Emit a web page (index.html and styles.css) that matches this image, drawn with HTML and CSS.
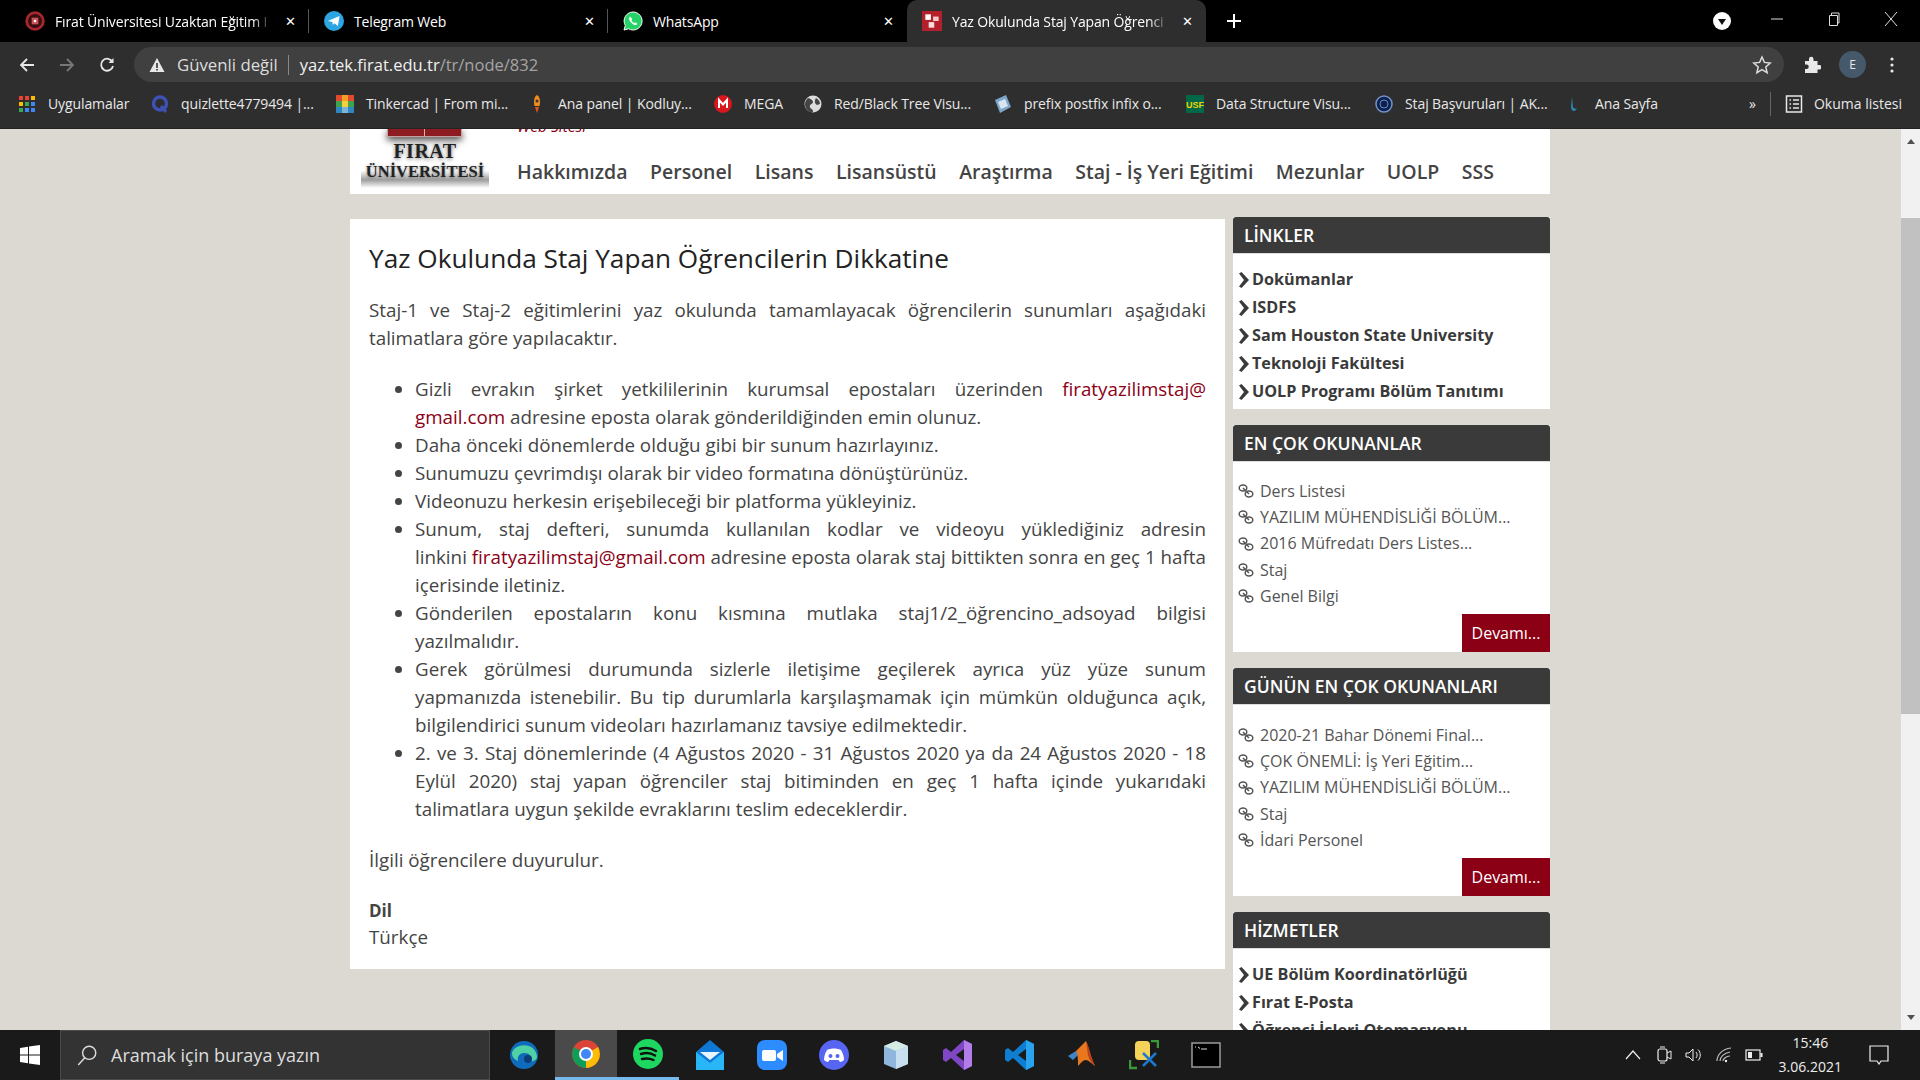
FILE: index.html
```html
<!DOCTYPE html>
<html lang="tr">
<head>
    <meta charset="UTF-8">
    <title>Yaz Okulunda Staj Yapan Öğrencilerin Dikkatine</title>
    <link rel="stylesheet" href="styles.css">
</head>
<body>
    <svg class="sprite" width="0" height="0">
        <symbol id="chev" viewBox="0 0 12 16"><path d="M1 1.500 3.500 0 11 8l-7.500 8L1 14.500 6 8z" fill="#3a3a3a"/></symbol>
        <symbol id="chain" viewBox="0 0 16 16"><g fill="none" stroke="#555" stroke-width="1.500"><ellipse cx="5" cy="5" rx="3.800" ry="3"/><ellipse cx="11" cy="11" rx="3.800" ry="3"/><path d="M5 5 11 11"/></g></symbol>
    </svg>

    <div class="tabstrip">
        <div class="tab">
            <svg class="favicon" viewBox="0 0 18 18"><circle cx="9" cy="9" r="7.500" fill="#3a0d10" stroke="#a8262e" stroke-width="2.500"/><rect x="6" y="6" width="6" height="6" fill="#c9545a"/><rect x="8" y="8" width="2" height="2" fill="#fff"/></svg>
            <span class="tab-title tab-fade">Fırat Üniversitesi Uzaktan Eğitim I</span>
            <span class="tab-close">✕</span>
        </div>
        <div class="tab">
            <svg class="favicon" viewBox="0 0 18 18"><circle cx="9" cy="9" r="9" fill="#2ca5e0"/><path d="M3.500 9 14 4.500 12.500 13.500 9.500 11 8 12.500 7.500 10z" fill="#fff"/></svg>
            <span class="tab-title">Telegram Web</span>
            <span class="tab-close">✕</span>
        </div>
        <div class="tab">
            <svg class="favicon" viewBox="0 0 20 20"><path d="M10 1a9 9 0 0 0-7.700 13.500L1 19l4.600-1.200A9 9 0 1 0 10 1z" fill="#25d366" stroke="#fff"/><path d="M7 5.500c-2 1.500-.5 4.500 1.500 6.500s4.500 3 6 1l-2-1.700-1.200.8c-1-.4-2.400-1.800-2.800-2.900l.8-1.100z" fill="#fff"/></svg>
            <span class="tab-title">WhatsApp</span>
            <span class="tab-close">✕</span>
        </div>
        <div class="tab tab-active">
            <svg class="favicon" viewBox="0 0 18 18"><rect width="18" height="18" fill="#b3202c"/><rect x="3" y="3" width="5" height="5" fill="#fff"/><rect x="10" y="5" width="5" height="4" fill="#f0c8c8"/><rect x="6" y="10" width="5" height="5" fill="#f4dede"/></svg>
            <span class="tab-title tab-fade">Yaz Okulunda Staj Yapan Öğrenci</span>
            <span class="tab-close">✕</span>
        </div>
        <svg class="newtab" viewBox="0 0 14 14"><path d="M7 0v14M0 7h14" stroke="#fff" stroke-width="2"/></svg>
        <svg class="tabsearch" viewBox="0 0 18 18"><circle cx="9" cy="9" r="9" fill="#fff"/><path d="M5 7h8l-4 6z" fill="#111"/></svg>
        <div class="winbtns">
            <svg viewBox="0 0 14 14"><path d="M1 7h12" stroke="#ddd"/></svg>
            <svg viewBox="0 0 14 14"><path d="M2.500 3.500h8v10h-8zM4.500 3.500V1h7.500v10h-1.500" fill="none" stroke="#ddd"/></svg>
            <svg viewBox="0 0 14 14"><path d="M1 0l12 14M13 0 1 14" stroke="#ddd"/></svg>
        </div>
    </div>

    <div class="toolbar">
        <svg class="navicon" viewBox="0 0 16 16"><path d="M15 8H2M8 2 2 8l6 6" fill="none" stroke="#e8e8e8" stroke-width="1.800"/></svg>
        <svg class="navicon" viewBox="0 0 16 16"><path d="M1 8h13M8 2l6 6-6 6" fill="none" stroke="#777" stroke-width="1.800"/></svg>
        <svg class="navicon" viewBox="0 0 16 16"><path d="M13.500 5A6 6 0 1 0 14 9" fill="none" stroke="#e8e8e8" stroke-width="1.800"/><path d="M14.500 1v5h-5z" fill="#e8e8e8"/></svg>
        <div class="omnibox">
            <svg class="warn" viewBox="0 0 16 16"><path d="M8 1 15.500 15H.5z" fill="#e8e8e8"/><path d="M7.200 6h1.600v5H7.200zM7.200 12h1.600v1.600H7.200z" fill="#333"/></svg>
            <span class="insecure">Güvenli değil</span>
            <span class="omni-sep"></span>
            <span class="url">yaz.tek.firat.edu.tr<span class="url-path">/tr/node/832</span></span>
            <svg class="star" viewBox="0 0 20 20"><path d="M10 2l2.400 5.400 5.800.6-4.400 3.900 1.300 5.800-5.100-3-5.100 3 1.300-5.800L1.800 8l5.800-.6z" fill="none" stroke="#ddd" stroke-width="1.500"/></svg>
        </div>
        <svg class="puzzle" viewBox="0 0 18 18"><path d="M2 5h4V3a2.200 2.200 0 0 1 4.500 0v2h4v4h2a2.200 2.200 0 0 1 0 4.500h-2V17H2v-4h1.500a2.200 2.200 0 0 0 0-4.500H2z" fill="#e8e8e8"/></svg>
        <span class="avatar">E</span>
        <svg class="kebab" viewBox="0 0 4 16"><circle cx="2" cy="2" r="1.600" fill="#e8e8e8"/><circle cx="2" cy="8" r="1.600" fill="#e8e8e8"/><circle cx="2" cy="14" r="1.600" fill="#e8e8e8"/></svg>
    </div>

    <div class="bookmarks">
        <div class="bm">
            <svg class="bm-icon" viewBox="0 0 18 18"><rect x="1" y="1" width="4" height="4" fill="#ea4335"/><rect x="7" y="1" width="4" height="4" fill="#ea4335"/><rect x="13" y="1" width="4" height="4" fill="#fbbc05"/><rect x="1" y="7" width="4" height="4" fill="#fbbc05"/><rect x="7" y="7" width="4" height="4" fill="#34a853"/><rect x="13" y="7" width="4" height="4" fill="#4285f4"/><rect x="1" y="13" width="4" height="4" fill="#34a853"/><rect x="7" y="13" width="4" height="4" fill="#4285f4"/><rect x="13" y="13" width="4" height="4" fill="#4285f4"/></svg>
            <span>Uygulamalar</span>
        </div>
        <div class="bm">
            <svg class="bm-icon" viewBox="0 0 18 18"><circle cx="9" cy="8.500" r="6.500" fill="none" stroke="#3f51b5" stroke-width="3.500"/><path d="M10 11l5 6" stroke="#3f51b5" stroke-width="3"/></svg>
            <span>quizlette4779494 |...</span>
        </div>
        <div class="bm">
            <svg class="bm-icon" viewBox="0 0 18 18"><rect width="6" height="6" fill="#e2492f"/><rect x="6" width="6" height="6" fill="#f4a024"/><rect x="12" width="6" height="6" fill="#e2492f"/><rect y="6" width="6" height="6" fill="#3fa34d"/><rect x="6" y="6" width="6" height="6" fill="#f4d03f"/><rect x="12" y="6" width="6" height="6" fill="#3fa34d"/><rect y="12" width="6" height="6" fill="#2e86c1"/><rect x="6" y="12" width="6" height="6" fill="#7fb3d5"/><rect x="12" y="12" width="6" height="6" fill="#2e86c1"/></svg>
            <span>Tinkercad | From mi...</span>
        </div>
        <div class="bm">
            <svg class="bm-icon" viewBox="0 0 18 18"><path d="M9 0c3 2 3.500 6 2.500 11h-5C5.500 6 6 2 9 0z" fill="#f08c1e"/><circle cx="9" cy="6" r="1.500" fill="#333"/><path d="M7 12h4l-2 6z" fill="#e0561b"/></svg>
            <span>Ana panel | Kodluy...</span>
        </div>
        <div class="bm">
            <svg class="bm-icon" viewBox="0 0 18 18"><circle cx="9" cy="9" r="9" fill="#d9161c"/><path d="M5 13V5l4 4.500L13 5v8" fill="none" stroke="#fff" stroke-width="2"/></svg>
            <span>MEGA</span>
        </div>
        <div class="bm">
            <svg class="bm-icon" viewBox="0 0 18 18"><circle cx="9" cy="9" r="8.500" fill="#dcdcdc"/><path d="M4 3c3 1 5 2 5 4s-4 2-3 5 3 1 3 5c-4 1-8-3-8-8 0-2 1-4 3-6zM12 3c2 1 4 3 4 6l-3 1c-2-1-3-4-1-7z" fill="#444"/></svg>
            <span>Red/Black Tree Visu...</span>
        </div>
        <div class="bm">
            <svg class="bm-icon" viewBox="0 0 18 18"><path d="M1 5 12 0l5 12-11 6z" fill="#7ea6c9"/><path d="M4 7l7-3 3 7-7 3z" fill="#d8e6f2"/></svg>
            <span>prefix postfix infix o...</span>
        </div>
        <div class="bm">
            <svg class="bm-icon" viewBox="0 0 18 18"><rect width="18" height="18" fill="#006747"/><text x="9" y="13" class="usf">USF</text></svg>
            <span>Data Structure Visu...</span>
        </div>
        <div class="bm">
            <svg class="bm-icon" viewBox="0 0 18 18"><circle cx="9" cy="9" r="8" fill="#10204a" stroke="#6f93c9" stroke-width="1.500"/><circle cx="9" cy="9" r="4" fill="none" stroke="#5b8fd6"/></svg>
            <span>Staj Başvuruları | AK...</span>
        </div>
        <div class="bm">
            <svg class="bm-icon" viewBox="0 0 18 18"><path d="M7 2c1 4 0 7 1 10 .5 2 3 2 4 1-1 3-4 4-5 2-2-3 0-9 0-13z" fill="#2b8cb0"/></svg>
            <span>Ana Sayfa</span>
        </div>
        <div class="bm-right">
            <span class="bm-more">»</span>
            <span class="bm-sep"></span>
            <svg class="bm-icon" viewBox="0 0 18 18"><rect x="1.500" y="1" width="15" height="16" fill="none" stroke="#e8e8e8" stroke-width="1.500"/><path d="M4.500 5h1.500M8 5h6M4.500 9h1.500M8 9h6M4.500 13h1.500M8 13h6" stroke="#e8e8e8" stroke-width="1.500"/></svg>
            <span>Okuma listesi</span>
        </div>
    </div>

    <div class="viewport">
        <div class="page">
            <header class="site-header">
                <div class="logo">
                    <div class="logo-mark"></div>
                    <div class="logo-name">FIRAT</div>
                    <div class="logo-uni">ÜNİVERSİTESİ</div>
                </div>
                <div class="header-right">
                    <div class="site-sub"><span>Web Sitesi</span></div>
                    <nav class="mainnav">
                        <a>Hakkımızda</a>
                        <a>Personel</a>
                        <a>Lisans</a>
                        <a>Lisansüstü</a>
                        <a>Araştırma</a>
                        <a>Staj - İş Yeri Eğitimi</a>
                        <a>Mezunlar</a>
                        <a>UOLP</a>
                        <a>SSS</a>
                    </nav>
                </div>
            </header>

            <div class="columns">
                <main class="content">
                    <h1>Yaz Okulunda Staj Yapan Öğrencilerin Dikkatine</h1>
                    <p>Staj-1 ve Staj-2 eğitimlerini yaz okulunda tamamlayacak öğrencilerin sunumları aşağıdaki talimatlara göre yapılacaktır.</p>
                    <ul>
                        <li><span class="full-line">Gizli evrakın şirket yetkililerinin kurumsal epostaları üzerinden <a>firatyazilimstaj@</a></span><a>gmail.com</a> adresine eposta olarak gönderildiğinden emin olunuz.</li>
                        <li>Daha önceki dönemlerde olduğu gibi bir sunum hazırlayınız.</li>
                        <li>Sunumuzu çevrimdışı olarak bir video formatına dönüştürünüz.</li>
                        <li>Videonuzu herkesin erişebileceği bir platforma yükleyiniz.</li>
                        <li><span class="full-line">Sunum, staj defteri, sunumda kullanılan kodlar ve videoyu yüklediğiniz adresin</span>linkini <a>firatyazilimstaj@gmail.com</a> adresine eposta olarak staj bittikten sonra en geç 1 hafta içerisinde iletiniz.</li>
                        <li>Gönderilen epostaların konu kısmına mutlaka staj1/2_öğrencino_adsoyad bilgisi yazılmalıdır.</li>
                        <li>Gerek görülmesi durumunda sizlerle iletişime geçilerek ayrıca yüz yüze sunum yapmanızda istenebilir. Bu tip durumlarla karşılaşmamak için mümkün olduğunca açık, bilgilendirici sunum videoları hazırlamanız tavsiye edilmektedir.</li>
                        <li>2. ve 3. Staj dönemlerinde (4 Ağustos 2020 - 31 Ağustos 2020 ya da 24 Ağustos 2020 - 18 Eylül 2020) staj yapan öğrenciler staj bitiminden en geç 1 hafta içinde yukarıdaki talimatlara uygun şekilde evraklarını teslim edeceklerdir.</li>
                    </ul>
                    <p>İlgili öğrencilere duyurulur.</p>
                    <div class="field-label">Dil</div>
                    <div class="field-value">Türkçe</div>
                </main>

                <aside class="sidebar">
                    <section class="widget">
                        <h2>LİNKLER</h2>
                        <ul class="bold-links">
                            <li><svg><use href="#chev"/></svg>Dokümanlar</li>
                            <li><svg><use href="#chev"/></svg>ISDFS</li>
                            <li><svg><use href="#chev"/></svg>Sam Houston State University</li>
                            <li><svg><use href="#chev"/></svg>Teknoloji Fakültesi</li>
                            <li><svg><use href="#chev"/></svg>UOLP Programı Bölüm Tanıtımı</li>
                        </ul>
                    </section>
                    <section class="widget">
                        <h2>EN ÇOK OKUNANLAR</h2>
                        <ul class="read-links">
                            <li><svg><use href="#chain"/></svg>Ders Listesi</li>
                            <li><svg><use href="#chain"/></svg>YAZILIM MÜHENDİSLİĞİ BÖLÜM...</li>
                            <li><svg><use href="#chain"/></svg>2016 Müfredatı Ders Listes...</li>
                            <li><svg><use href="#chain"/></svg>Staj</li>
                            <li><svg><use href="#chain"/></svg>Genel Bilgi</li>
                        </ul>
                        <div class="more-row"><a class="more">Devamı...</a></div>
                    </section>
                    <section class="widget">
                        <h2>GÜNÜN EN ÇOK OKUNANLARI</h2>
                        <ul class="read-links">
                            <li><svg><use href="#chain"/></svg>2020-21 Bahar Dönemi Final...</li>
                            <li><svg><use href="#chain"/></svg>ÇOK ÖNEMLİ: İş Yeri Eğitim...</li>
                            <li><svg><use href="#chain"/></svg>YAZILIM MÜHENDİSLİĞİ BÖLÜM...</li>
                            <li><svg><use href="#chain"/></svg>Staj</li>
                            <li><svg><use href="#chain"/></svg>İdari Personel</li>
                        </ul>
                        <div class="more-row"><a class="more">Devamı...</a></div>
                    </section>
                    <section class="widget">
                        <h2>HİZMETLER</h2>
                        <ul class="bold-links">
                            <li><svg><use href="#chev"/></svg>UE Bölüm Koordinatörlüğü</li>
                            <li><svg><use href="#chev"/></svg>Fırat E-Posta</li>
                            <li><svg><use href="#chev"/></svg>Öğrenci İşleri Otomasyonu</li>
                        </ul>
                    </section>
                </aside>
            </div>
        </div>
        <div class="scrollbar">
            <span class="arrow-up"></span>
            <div class="scroll-track"><div class="scroll-thumb"></div></div>
            <span class="arrow-down"></span>
        </div>
    </div>

    <div class="taskbar">
        <svg class="start" viewBox="0 0 20 20"><path d="M0 3l8-1.200V9.500H0zM9 1.600 20 0v9.500H9zM0 10.500h8v7.700L0 17zM9 10.500h11V20L9 18.400z" fill="#fff"/></svg>
        <div class="searchbox">
            <svg viewBox="0 0 20 20"><circle cx="12" cy="8" r="6" fill="none" stroke="#ddd" stroke-width="1.300"/><path d="M8 12.500 2 19" stroke="#ddd" stroke-width="1.300"/></svg>
            <span>Aramak için buraya yazın</span>
        </div>
        <div class="taskicons">
            <div class="ti"><svg viewBox="0 0 30 30"><circle cx="15" cy="15" r="14" fill="#0f6cbd"/><path d="M3 13C5 3 27 1 28 17c0 3-4 5-8 4 3-3 2-8-5-8-4 0-7 3-6 8C5 19 3 17 3 13z" fill="#4fd1a5"/><circle cx="19" cy="19" r="4" fill="#0c3f7a"/></svg></div>
            <div class="ti ti-active"><svg viewBox="0 0 30 30"><circle cx="15" cy="15" r="14" fill="#db4437"/><path d="M15 15 27 8a14 14 0 0 1-12 21z" fill="#fbbc05"/><path d="M15 15 15 29A14 14 0 0 1 3 8z" fill="#0f9d58"/><circle cx="15" cy="15" r="7" fill="#fff"/><circle cx="15" cy="15" r="5" fill="#4285f4"/></svg></div>
            <div class="ti ti-open"><svg viewBox="0 0 30 30"><circle cx="15" cy="15" r="15" fill="#1ed760"/><path d="M7 10c6-2 11-1 16 2M8 15c5-1.500 10-1 14 1.500M9 20c4-1 8-.7 11.500 1" fill="none" stroke="#111" stroke-width="2.500" stroke-linecap="round"/></svg></div>
            <div class="ti"><svg viewBox="0 0 30 30"><path d="M1 12 15 0l14 12v18H1z" fill="#0f78d4"/><path d="M1 12l14 11 14-11v18H1z" fill="#29b6f6"/><path d="M5 12h20l-10 8z" fill="#e8f4fc"/></svg></div>
            <div class="ti"><svg viewBox="0 0 30 30"><rect width="30" height="30" rx="8" fill="#2d8cff"/><rect x="5" y="10" width="14" height="11" rx="2" fill="#fff"/><path d="M20 14l6-4v11l-6-4z" fill="#fff"/></svg></div>
            <div class="ti"><svg viewBox="0 0 30 30"><circle cx="15" cy="15" r="15" fill="#5865f2"/><path d="M8 10c4-2 10-2 14 0 2 3 3 7 3 10-2 1.500-3 2-4 2l-1.500-2h-9L9 22c-1 0-2-.5-4-2 0-3 1-7 3-10z" fill="#fff"/><circle cx="11.500" cy="16" r="2" fill="#5865f2"/><circle cx="18.500" cy="16" r="2" fill="#5865f2"/></svg></div>
            <div class="ti"><svg viewBox="0 0 30 30"><path d="M15 1 27 6v18l-12 5-12-5V6z" fill="#8fb7dd"/><path d="M15 1 27 6l-12 5L3 6z" fill="#d5ece4"/><path d="M15 11v18l12-5V6z" fill="#c8dff0"/></svg></div>
            <div class="ti"><svg viewBox="0 0 30 30"><path d="M21 0 8 12 3 8 0 10v10l3 2 5-4 13 12 8-4V4zM21 9v12l-8-6z" fill="#7f47c4"/><path d="M21 0l8 4v22l-8 4z" fill="#b27de8"/></svg></div>
            <div class="ti"><svg viewBox="0 0 30 30"><path d="M21 0 8 12 3 8 0 10v10l3 2 5-4 13 12 8-4V4zM21 9v12l-8-6z" fill="#0e7fd0"/><path d="M21 0l8 4v22l-8 4z" fill="#29a3ee"/></svg></div>
            <div class="ti"><svg viewBox="0 0 30 30"><path d="M1 16 9 11l3 3-6 6z" fill="#3f86c8"/><path d="M9 11 19 1c3 6 5 17 9 25-4-3-7-6-9-6-3 0-5 3-8 6 0-6 0-11-2-15z" fill="#e8771d"/><path d="M19 1c3 6 5 17 9 25-4-3-6-7-7-11z" fill="#b9401b"/></svg></div>
            <div class="ti"><svg viewBox="0 0 30 30"><rect x="6" y="1" width="15" height="19" rx="4" fill="#f5d25a"/><path d="M1 20v8h7M22 1h7v7" fill="none" stroke="#3a9a3a" stroke-width="2.500"/><path d="M14 13l13 13M27 13 14 26" stroke="#1d78d0" stroke-width="2.500"/></svg></div>
            <div class="ti"><svg viewBox="0 0 30 30"><rect x="1" y="3" width="28" height="24" fill="#000" stroke="#9a9a9a" stroke-width="1.500"/><path d="M4 7h1M7 7l2 1.500M10 9h6" stroke="#ddd"/></svg></div>
        </div>
        <div class="tray">
            <svg class="tray-chev" viewBox="0 0 16 10"><path d="M1 9 8 1l7 8" fill="none" stroke="#eee" stroke-width="1.200"/></svg>
            <svg class="tray-ic" viewBox="0 0 18 18"><rect x="3" y="3" width="9" height="12" rx="2" fill="none" stroke="#eee" stroke-width="1.200"/><path d="M12 7l4-2v8l-4-2M5 1h5M5 17h5" fill="none" stroke="#eee"/></svg>
            <svg class="tray-ic" viewBox="0 0 18 18"><path d="M1 7h3l4-4v12l-4-4H1zM11 6c1.500 2 1.500 4 0 6M13 3.500c3 3 3 8 0 11" fill="none" stroke="#eee"/></svg>
            <svg class="tray-ic" viewBox="0 0 18 18"><path d="M2 15C2 9 7 3 16 2M5 15c0-4 4-8 10-9M8 15c0-2 3-5 7-5" fill="none" stroke="#bbb" stroke-width="1.200"/><circle cx="11" cy="15" r="1.200" fill="#eee"/></svg>
            <svg class="tray-ic" viewBox="0 0 18 18"><rect x="1" y="4" width="14" height="10" fill="none" stroke="#eee" stroke-width="1.200"/><rect x="3" y="6" width="4" height="6" fill="#eee"/><rect x="15.500" y="7" width="2" height="4" fill="#eee"/></svg>
            <div class="clock"><div>15:46</div><div>3.06.2021</div></div>
            <svg class="notif" viewBox="0 0 20 20"><path d="M1 1h18v15h-7l-2 3-2-3H1z" fill="none" stroke="#eee" stroke-width="1.200"/></svg>
        </div>
    </div>
</body>
</html>
```
FILE: styles.css
```css
* {
    box-sizing: border-box;
}
html, body {
    height: 100%;
}
body {
    margin: 0;
    display: flex;
    flex-direction: column;
    overflow: hidden;
    font-family: "Open Sans", "Noto Sans", sans-serif;
    background-color: #dcd8d2;
}
.sprite {
    position: absolute;
}

/* browser chrome */
.tabstrip {
    height: 42px;
    flex: none;
    display: flex;
    align-items: center;
    padding-left: 10px;
    background-color: #000;
    color: #fff;
    font-size: 14px;
}
.tab {
    width: 299px;
    height: 42px;
    padding: 0 10px 0 15px;
    display: flex;
    align-items: center;
    gap: 10px;
    position: relative;
}
.tab:nth-child(1)::after,
.tab:nth-child(2)::after {
    content: "";
    position: absolute;
    right: 0;
    top: 9px;
    height: 24px;
    width: 1px;
    background-color: #555;
}
.tab-active {
    background-color: #2e2e2e;
    border-radius: 10px 10px 0 0;
}
.favicon {
    width: 20px;
    height: 20px;
    flex: none;
}
.tab-title {
    flex: 1;
    white-space: nowrap;
    letter-spacing: -0.15px;
}
.tab-fade {
    -webkit-mask-image: linear-gradient(to right, #000 90%, transparent 99%);
    mask-image: linear-gradient(to right, #000 90%, transparent 99%);
}
.tab-close {
    font-size: 13px;
    width: 13px;
    text-align: center;
    margin-right: 2px;
}
.newtab {
    width: 14px;
    height: 14px;
    margin-left: 21px;
}
.tabsearch {
    width: 18px;
    height: 18px;
    margin-left: 472px;
}
.winbtns {
    margin-left: auto;
    display: flex;
    gap: 43px;
    padding-right: 22px;
    align-items: center;
    position: relative;
    top: -2px;
}
.winbtns svg {
    width: 14px;
    height: 14px;
}

.toolbar {
    height: 42px;
    flex: none;
    display: flex;
    align-items: center;
    padding: 3px 0 0 19px;
    background-color: #2e2e2e;
    color: #e8e8e8;
}
.navicon {
    width: 16px;
    height: 16px;
    margin-right: 24px;
}
.omnibox {
    width: 1650px;
    height: 35px;
    margin-left: -5px;
    padding: 0 12px 0 15px;
    display: flex;
    align-items: center;
    border-radius: 18px;
    background-color: #404040;
    font-size: 16.500px;
}
.warn {
    width: 16px;
    height: 16px;
    margin-right: 12px;
}
.insecure {
    color: #ddd;
    white-space: nowrap;
    font-size: 16.800px;
}
.omni-sep {
    width: 1px;
    height: 20px;
    margin: 0 11px 0 10px;
    background-color: #888;
}
.url {
    flex: 1;
    color: #f0f0f0;
    white-space: nowrap;
}
.url-path {
    color: #a5a5a5;
}
.star {
    width: 20px;
    height: 20px;
}
.puzzle {
    width: 18px;
    height: 18px;
    margin-left: 19px;
}
.avatar {
    width: 27px;
    height: 27px;
    margin-left: 18px;
    border-radius: 50%;
    background-color: #46596b;
    font-size: 12px;
    line-height: 27px;
    text-align: center;
}
.kebab {
    width: 4px;
    height: 16px;
    margin-left: 24px;
}

.bookmarks {
    height: 45px;
    flex: none;
    display: grid;
    grid-template-columns: 133px 185px 192px 186px 90px 190px 192px 189px 190px 160px 1fr;
    align-items: center;
    padding: 0 0 5px 18px;
    background-color: #2e2e2e;
    color: #e8e8e8;
    font-size: 14px;
    border-bottom: 1px solid #222;
}
.bm, .bm-right {
    display: flex;
    align-items: center;
    gap: 12px;
    white-space: nowrap;
}
.bm span {
    letter-spacing: -0.1px;
}
.bm-right {
    justify-content: flex-end;
    padding-right: 18px;
    gap: 11px;
}
.bm-icon {
    width: 18px;
    height: 18px;
    flex: none;
}
.usf {
    font: bold 9px "Liberation Sans", sans-serif;
    fill: #f5d000;
    text-anchor: middle;
}
.bm-more {
    font-size: 14px;
}
.bm-sep {
    width: 1px;
    height: 24px;
    margin: 0 3px;
    background-color: #666;
}

/* page area */
.viewport {
    flex: 1;
    min-height: 0;
    display: flex;
    overflow: hidden;
}
.page {
    flex: 1;
    padding-left: 350px;
    overflow: hidden;
}
.site-header {
    width: 1200px;
    height: 65px;
    display: flex;
    background-color: #fff;
}
.logo {
    width: 167px;
    padding-left: 11px;
    flex: none;
    text-align: center;
    font-family: "Liberation Serif", serif;
    font-weight: bold;
    color: #222;
}
.logo-mark {
    width: 75px;
    height: 8px;
    margin-left: 26px;
    background: linear-gradient(to right, #8c1c22 49%, #d8b0b0 49%, #d8b0b0 51%, #8c1c22 51%);
    border: 1px solid #c9a0a0;
    border-top: none;
    box-shadow: 0 3px 7px #444;
}
.logo-name {
    width: 128px;
    font-size: 20px;
    line-height: 20px;
    margin-top: 4px;
    letter-spacing: 0.5px;
    text-shadow: 0 1px 4px #777;
}
.logo-uni {
    width: 128px;
    height: 27px;
    font-size: 16.500px;
    line-height: 21px;
    background: linear-gradient(to bottom, transparent 35%, rgba(0, 0, 0, 0.38) 70%, transparent);
    text-shadow: 0 1px 3px #777;
}
.header-right {
    flex: 1;
}
.site-sub {
    height: 6px;
    display: flex;
    align-items: flex-end;
    overflow: hidden;
    font-size: 15.500px;
    line-height: 18px;
    font-style: italic;
    color: #8c0016;
}
.mainnav {
    margin-top: 23px;
    display: flex;
    gap: 22.500px;
    font-size: 19.500px;
    font-weight: 600;
    line-height: 28px;
    color: #444;
    white-space: nowrap;
}
.columns {
    width: 1200px;
    margin-top: 23px;
    display: flex;
    align-items: flex-start;
    gap: 8px;
}
.content {
    width: 875px;
    height: 750px;
    margin-top: 2px;
    padding: 21px 19px 0;
    background-color: #fff;
    color: #444;
    font-size: 18.800px;
    line-height: 28px;
    text-align: justify;
}
.content h1 {
    margin: 0 0 20px;
    font-size: 26.200px;
    font-weight: 400;
    line-height: 36px;
    color: #222;
    text-align: left;
}
.content p {
    margin: 0;
}
.content ul {
    margin: 23px 0;
    padding-left: 46px;
}
.content a {
    color: #8c0016;
}
/* a list line that has to end at this word, still stretched to the right edge */
.full-line {
    display: block;
    text-align-last: justify;
}
.field-label {
    margin-top: 24px;
    font-size: 17px;
    font-weight: 700;
    line-height: 26px;
}
.field-value {
    line-height: 26px;
}

.sidebar {
    width: 317px;
    flex: none;
}
.widget {
    margin-bottom: 16px;
    background-color: #fff;
}
.widget h2 {
    margin: 0;
    height: 37px;
    padding-left: 11px;
    background-color: #3a3a3a;
    border-radius: 3px 3px 0 0;
    border-bottom: 1px solid #ddd;
    color: #fff;
    font-size: 17.500px;
    font-weight: 600;
    line-height: 36px;
}
.widget ul {
    list-style: none;
    margin: 0;
    padding: 0;
}
.widget .bold-links {
    padding: 11px 0 4px 5px;
    font-size: 16.200px;
    font-weight: 700;
    line-height: 28px;
    color: #3a3a3a;
}
.bold-links li {
    display: flex;
    align-items: center;
    white-space: nowrap;
}
.bold-links svg {
    width: 12px;
    height: 18px;
    margin: 2px 2px 0 0;
    flex: none;
}
.widget .read-links {
    padding: 16px 0 5px 5px;
    font-size: 16px;
    line-height: 26.200px;
    color: #555;
}
.widget:nth-child(3) .read-links {
    padding-top: 17px;
}
.read-links li {
    display: flex;
    align-items: center;
    white-space: nowrap;
}
.read-links svg {
    width: 16px;
    height: 16px;
    margin-right: 6px;
    flex: none;
}
.more-row {
    display: flex;
    justify-content: flex-end;
}
.more {
    width: 88px;
    height: 38px;
    background-color: #8c0016;
    color: #fff;
    font-size: 16px;
    line-height: 38px;
    text-align: center;
}

.scrollbar {
    width: 19px;
    flex: none;
    display: flex;
    flex-direction: column;
    align-items: center;
    background-color: #f1f1f1;
}
.arrow-up, .arrow-down {
    width: 0;
    height: 0;
    flex: none;
    margin: 10px 0;
    border-left: 4px solid transparent;
    border-right: 4px solid transparent;
}
.arrow-up {
    border-bottom: 5px solid #505050;
}
.arrow-down {
    border-top: 5px solid #505050;
}
.scroll-track {
    flex: 1;
    width: 100%;
    padding-top: 64px;
}
.scroll-thumb {
    height: 496px;
    background-color: #c1c1c1;
}

/* windows taskbar */
.taskbar {
    height: 50px;
    flex: none;
    display: flex;
    align-items: center;
    background-color: #1a1a1a;
    color: #eee;
}
.start {
    width: 20px;
    height: 20px;
    margin: 0 20px;
    flex: none;
}
.searchbox {
    width: 430px;
    height: 50px;
    flex: none;
    display: flex;
    align-items: center;
    gap: 13px;
    padding-left: 15px;
    background-color: #333;
    border: 1px solid #4a4a4a;
    font-size: 18px;
    color: #ddd;
}
.searchbox svg {
    width: 22px;
    height: 22px;
    flex: none;
}
.taskicons {
    display: flex;
    margin-left: 3px;
}
.ti {
    width: 62px;
    height: 50px;
    display: flex;
    align-items: center;
    justify-content: center;
}
.ti svg {
    width: 30px;
    height: 30px;
}
.ti-active {
    background-color: #4a4a4a;
    border-bottom: 3px solid #76b9ed;
}
.ti-open {
    border-bottom: 3px solid #76b9ed;
}
.tray {
    margin-left: auto;
    display: flex;
    align-items: center;
    padding-right: 31px;
}
.tray-chev {
    width: 16px;
    height: 10px;
    margin-right: 14px;
}
.tray-ic {
    width: 18px;
    height: 18px;
    margin-right: 12px;
}
.clock {
    margin: 0 27px 0 4px;
    font-size: 14px;
    line-height: 24px;
    text-align: center;
}
.notif {
    width: 20px;
    height: 20px;
}
```
